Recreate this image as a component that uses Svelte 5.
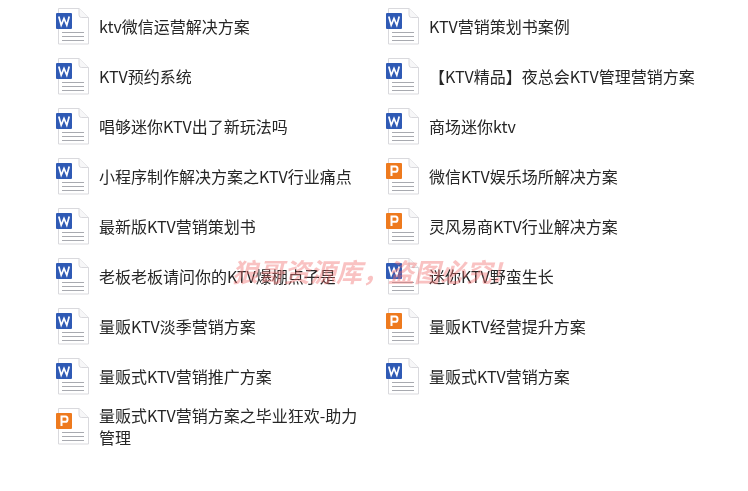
<script>
  const rows = [
    ['w', 'ktv微信运营解决方案'], ['w', 'KTV营销策划书案例'],
    ['w', 'KTV预约系统'], ['w', '【KTV精品】夜总会KTV管理营销方案'],
    ['w', '唱够迷你KTV出了新玩法吗'], ['w', '商场迷你ktv'],
    ['w', '小程序制作解决方案之KTV行业痛点'], ['p', '微信KTV娱乐场所解决方案'],
    ['w', '最新版KTV营销策划书'], ['p', '灵风易商KTV行业解决方案'],
    ['w', '老板老板请问你的KTV爆棚点子是'], ['w', '迷你KTV野蛮生长'],
    ['w', '量贩KTV淡季营销方案'], ['p', '量贩KTV经营提升方案'],
    ['w', '量贩式KTV营销推广方案'], ['w', '量贩式KTV营销方案'],
    ['p', '量贩式KTV营销方案之毕业狂欢-助力管理']
  ];
</script>

<main class="page">
  <div class="grid">
    {#each rows as [kind, label]}
      <div class="file">
        <svg class="icon" width="34" height="38" viewBox="0 0 34 38" aria-hidden="true">
          <path d="M2.5 1.5H23L32.5 10.5V37H2.5Z" fill="#fff" stroke="#d9d9dd" stroke-width="1"/>
          <path d="M23 1.5V8Q23 10.5 25.5 10.5H32.5" fill="#f7f7f8" stroke="#d9d9dd" stroke-width="1"/>
          <path d="M6 25.5H28M6 29.5H28M6 33.5H28" stroke="#a8aab0" stroke-width="1" fill="none"/>
          {#if kind === 'w'}
            <rect x="0" y="6" width="16" height="16" rx="1" fill="#2f5ab5"/>
            <path d="M2.8 9.5L5.2 18.2L8 11.5L10.8 18.2L13.2 9.5" fill="none" stroke="#fff" stroke-width="1.7"/>
          {:else}
            <rect x="0" y="6" width="16" height="16" rx="1" fill="#ee7a1e"/>
            <path d="M5.5 19V9.5H9.5C12.2 9.5 12.2 14.8 9.5 14.8H5.5" fill="none" stroke="#fff" stroke-width="2"/>
          {/if}
        </svg>
        <span class="label">{label}</span>
      </div>
    {/each}
  </div>
  <div class="mark">狼哥资源库，盗图必究!</div>
</main>

<style>
  :global(body) { margin: 0; background: #fff; }
  .page {
    position: relative;
    width: 748px;
    height: 491px;
    overflow: hidden;
    box-sizing: border-box;
    padding: 1px 0 0 56px;
    font-family: "Noto Sans CJK SC", "Liberation Sans", sans-serif;
  }
  .grid {
    display: grid;
    grid-template-columns: 330px 330px;
    grid-auto-rows: 50px;
    filter: blur(0.35px);
  }
  .file {
    display: flex;
    align-items: center;
    gap: 9px;
  }
  .icon { flex: none; }
  .label {
    width: 262px;
    flex: none;
    font-size: 16px;
    line-height: 22px;
    color: #262626;
  }
  .file:nth-child(even) .label { width: 290px; }
  .mark {
    position: absolute;
    left: 232px;
    top: 256px;
    font-size: 26px;
    line-height: 30px;
    font-style: italic;
    font-weight: 700;
    white-space: nowrap;
    color: rgba(240, 110, 110, 0.42);
    filter: blur(0.4px);
  }
</style>
